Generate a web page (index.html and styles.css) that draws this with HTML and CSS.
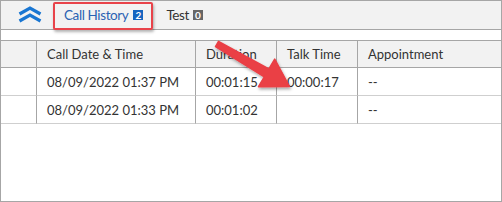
FILE: index.html
```html
<!DOCTYPE html>
<html>
<head>
<meta charset="utf-8">
<link rel="stylesheet" href="styles.css">
</head>
<body>
<div class="frame">
  <div class="tabbar">
    <div class="collapse">
      <svg width="26" height="17" viewBox="0 0 26 17">
        <polyline points="2.5,8 13,2 23.5,8" fill="none" stroke="#1976d2" stroke-width="3.2"/>
        <polyline points="2.5,15 13,9 23.5,15" fill="none" stroke="#1976d2" stroke-width="3.2"/>
      </svg>
    </div>
    <div class="tab active">Call History<span class="badge blue">2</span></div>
    <div class="tab">Test<span class="badge gray">0</span></div>
  </div>
  <div class="spacer"></div>
  <div class="grid">
    <div class="cell head"></div>
    <div class="cell head">Call Date &amp; Time</div>
    <div class="cell head">Duration</div>
    <div class="cell head">Talk Time</div>
    <div class="cell head last">Appointment</div>

    <div class="cell"></div>
    <div class="cell">08/09/2022 01:37 PM</div>
    <div class="cell">00:01:15</div>
    <div class="cell">00:00:17</div>
    <div class="cell last">--</div>

    <div class="cell"></div>
    <div class="cell">08/09/2022 01:33 PM</div>
    <div class="cell">00:01:02</div>
    <div class="cell"></div>
    <div class="cell last">--</div>
  </div>

  <div class="highlight"></div>
  <svg class="arrow" width="502" height="202" viewBox="0 0 502 202">
    <defs>
      <filter id="sh" x="-20%" y="-20%" width="140%" height="140%">
        <feDropShadow dx="1" dy="2" stdDeviation="1.5" flood-color="#000" flood-opacity="0.35"/>
      </filter>
    </defs>
    <polygon filter="url(#sh)" fill="#ea3f45" stroke="#ea3f45" stroke-width="1.5" stroke-linejoin="round"
      points="218.5,41.4 268.9,69.0 274.7,59.1 289.5,86.5 258.5,86.7 264.3,76.8 215.5,46.6"/>
  </svg>
</div>
</body>
</html>
```

FILE: styles.css
```css
* { box-sizing: border-box; }
html, body { margin: 0; padding: 0; background: #fff; }
body { font-family: Lato, "Noto Sans", sans-serif; }

.frame {
  position: relative;
  width: 502px;
  height: 202px;
  border: 1px solid #a6a6a6;
  overflow: hidden;
}

.tabbar {
  height: 29px;
  background: #f2f2f2;
  border-bottom: 1px solid #a6a6a6;
  display: flex;
  align-items: center;
}

.collapse {
  width: 63px;
  padding-left: 16px;
  display: flex;
  align-items: center;
  margin-top: -1px;
}

.tab {
  font-size: 13.5px;
  letter-spacing: -0.4px;
  color: #333;
  display: flex;
  align-items: center;
}
.tab.active { color: #2a62b3; margin-right: 23px; }

.badge {
  display: inline-block;
  width: 10px;
  height: 10px;
  margin-left: 5px;
  font-size: 10px;
  font-weight: bold;
  letter-spacing: 0;
  line-height: 10px;
  text-align: center;
  color: #fff;
}
.badge.blue { background: #1565c0; }
.badge.gray { background: #666; margin-left: 4px; }

.spacer { height: 10px; }

.grid {
  display: grid;
  grid-template-columns: 36px 159px 81px 81px 1fr;
  border-top: 1px solid #a6a6a6;
}

.cell {
  height: 28px;
  border-right: 1px solid #a6a6a6;
  border-bottom: 1px solid #cfcfcf;
  padding-left: 10px;
  font-size: 13px;
  color: #333;
  display: flex;
  align-items: center;
  white-space: nowrap;
}
.cell.last { border-right: none; }
.cell.head {
  height: 27px;
  background: #f2f2f2;
  border-bottom-color: #a6a6a6;
}

.highlight {
  position: absolute;
  left: 52px;
  top: 1px;
  width: 100px;
  height: 28px;
  border: 2px solid #e8434a;
  border-radius: 2px;
  box-shadow: 1px 2px 3px rgba(0,0,0,0.3);
}

.arrow {
  position: absolute;
  left: -1px;
  top: -1px;
}
```
